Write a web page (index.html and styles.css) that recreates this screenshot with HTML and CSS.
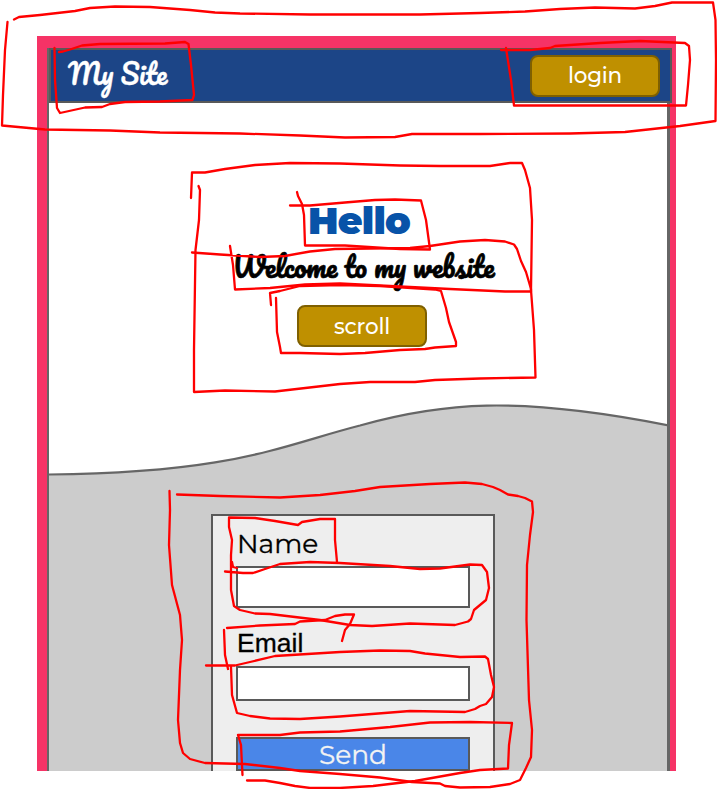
FILE: index.html
```html
<!DOCTYPE html>
<html lang="en">
<head>
<meta charset="utf-8">
<title>My Site</title>
<link rel="stylesheet" href="styles.css">
</head>
<body>
<div class="frame">
  <main class="canvas">
    <header class="header">
      <span class="brand">My Site</span>
      <button class="button">login</button>
    </header>
    <section class="hero">
      <h1>Hello</h1>
      <p class="tagline">Welcome to my website</p>
      <button class="button scroll">scroll</button>
    </section>
    <svg class="wave" width="618" height="76" viewBox="49 404 618 76">
      <path class="wave-fill" d="M47 474.500C233 473 280 446 360 425.500C440 403 515 395 669 425.500V482H47Z"/>
    </svg>
    <section class="contact">
      <form class="form">
        <label class="name" for="name">Name</label>
        <input id="name" class="field field-name" type="text">
        <label class="email" for="email">Email</label>
        <input id="email" class="field field-email" type="text">
        <button class="send" type="button">Send</button>
      </form>
    </section>
  </main>
</div>
<svg class="notes" width="717" height="789" viewBox="0 0 717 789" aria-hidden="true">
  <path d="M14 19.500L19 17L40 15L75 11L90 8L115 6.500L150 7L190 10L215 12.500L240 13.500L310 14.500H420L480 13L525 11.500L560 9L595 7.500L635 8.500L655 6L672 2.500H713L715.500 20L716 60L715.500 121L680 126L625 132L570 133.500L480 134H412L395 137L345 137.500L300 135.500L240 133.500L160 132.500L110 130.500L45 129.500L2 125.500L3 95L5 50L7.500 22"/>
  <path d="M59 52L63 51.500L70 49.500L82 45.500L100 44L165 43.500L185 42L188.500 44L191 65L194 95L192.500 100L160 101.500L125 102L110 104L102 107L85 107.500L60 113L57 108L55 80L54.500 48"/>
  <path d="M501 50H530L550 48L555 46L600 43L640 41L685 43L689 46L690 60L688 85L686 105.500H514L511 80L506 48"/>
  <path d="M191 198L192 172.500H205L225 169L255 165L290 163L340 163.500L400 165.500L440 166H490L510 163L522 163L525 170L530 188L532 220L531 290L534 330L535.500 377.500L480 378.500L435 380L415 382H370L340 384L275 391.500L225 390.500L194 392L194 350L195.500 250L199 220L200 190L198.500 186"/>
  <path d="M290 205.500H310L345 202.500L375 200L395 199.500L421 200.500L426 220L430 249.500L400 249L345 245.500H305L304 215L302 204L298 196L297 192"/>
  <path d="M192 252.500L220 254.500L260 257L285 256L310 251.500L335 249L370 248.500L410 248L430 246L460 241.500L485 240L505 241.500L514 244.500L517 249L521 261L526 272L531 289V291.500H505L450 289L400 286.500L340 283.500L305 284.500L270 288L235 289.500L233 265L230 246"/>
  <path d="M271 305L270 293L280 291L300 286L340 285L380 286L435 289.500L441 291L446 308L449 322L456 342V346L435 347.500L425 349L400 350L365 353L340 354L300 353H281L280 347L277 332L276 298"/>
  <path d="M177 494.500L220 496L280 497.500L320 495L355 491L380 487L430 484L465 482.500L482 484L493 487L500 490L508 494.500L518 496L525 498L532 501.500L533 512L530 535L527 565L526.500 620L529 700L532 730L531 757L526 768L520 780L510 784L490 787L460 787.500L445 786L440 783.500L412 782L380 777.500L340 774L300 771L280 768L245 764L205 763L190 759L183 753L180 743L178 720L180 670L182 640L180 615L172 585L169 545L170 510L169.500 491"/>
  <path d="M337 562L335 540V519H320L302 522L298 525L275 521L255 518L229 517.500V527L232 540L231 555V590L234 606L240 610L255 613.500L270 614L320 620L350 625L372 626L410 623.500L455 625L468 621.500L471 619L474 610L486 600L489 588L487 572L482 565L470 564.500L440 568.500L420 569L390 566L340 563L310 562L280 564L265 569L253 573L243 573L225 571.500M232 562L233 567L237 568"/>
  <path d="M227 628L260 625.500L295 624L300 621.500L325 620L335 616L345 614.500H354L350 624L345 630L342 641M224 630L225 655L228 669"/>
  <path d="M206 665.500H235L250 662L275 656L340 652L380 650.500L410 651L425 653.500L460 657L485 656.500L488 659L491 675L494 687L492 697L486 704L480 706L475 709L465 712L410 711L340 716.500L300 719L270 718.500L250 716L237 713L232 695L231 667"/>
  <path d="M238 735H280L300 732.500L340 731.500L390 727L430 722.500L470 722L512 723L509 745L508 768.500L480 770L460 773L415 781L373 786L340 788H310L295 786L280 783L265 780.500H247M238 735L241 745L242.500 775"/>
</svg>
</body>
</html>
```
FILE: styles.css
```css
* { box-sizing: border-box; }

body {
  margin: 0;
  height: 789px;
  overflow: hidden;
  background: #fff;
  color: #000;
  font-family: Montserrat, Inter, sans-serif;
}

.frame {
  width: 639px;
  height: 735px;
  margin: 36px 0 0 37px;
  padding: 12px 6px 0 10px;
  background: #f63366;
}

.canvas {
  display: flex;
  flex-direction: column;
  height: 723px;
  border: solid #666;
  border-width: 0 3px 0 2px;
  background: #fff;
}

.header {
  display: flex;
  justify-content: space-between;
  align-items: center;
  flex: none;
  width: 623px;
  height: 55px;
  padding: 0 10px 0 17px;
  border: 2px solid #595959;
  background: #1c4587;
}

.brand, .tagline {
  font-family: Pacifico, "Liberation Serif", serif;
  font-weight: 400;
  white-space: nowrap;
}

.brand {
  color: #fff;
  font-size: 27px;
  line-height: 40px;
  padding-bottom: 3px;
  -webkit-text-stroke: 0.3px #fff;
}

.button {
  display: block;
  width: 130px;
  height: 42px;
  padding: 0;
  border: 2px solid #7f6000;
  border-radius: 8px;
  background: #bf9000;
  color: #fff;
  font: 500 21.5px/37px Montserrat, Inter, sans-serif;
  letter-spacing: -0.2px;
}

.hero {
  display: flex;
  flex-direction: column;
  align-items: center;
  flex: none;
  height: 301px;
  padding-top: 98px;
}

h1 {
  margin: 0 0 0 2px;
  color: #0853a8;
  font-size: 38px;
  font-weight: 900;
  letter-spacing: -0.8px;
  line-height: 40px;
}

.tagline {
  margin: 6px 0 18px 11px;
  font-size: 26.8px;
  line-height: 40px;
  -webkit-text-stroke: 0.7px #000;
}

.scroll { margin-left: 8px; }

.wave { display: block; flex: none; }

.wave-fill {
  fill: #ccc;
  stroke: #666;
  stroke-width: 2.2;
}

.contact {
  flex: 1;
  min-height: 0;
  padding: 34px 0 0 162px;
  background: #ccc;
}

.form {
  display: flex;
  flex-direction: column;
  width: 284px;
  height: 257px;
  padding: 10px 23px 0;
  border: 2px solid #595959;
  border-bottom: 0;
  background: #eee;
}

label {
  height: 40px;
  padding-left: 1px;
  font-size: 26.5px;
  line-height: 35px;
}

.name { -webkit-text-stroke: 0.3px #000; }

.email {
  margin-top: 18px;
  font-family: "Liberation Sans", sans-serif;
  -webkit-text-stroke: 0.3px #000;
}

.field {
  width: 234px;
  padding: 0 8px;
  border: 2px solid #595959;
  background: #fff;
}

.field-name { height: 42px; }
.field-email { height: 35px; }

.send {
  width: 234px;
  height: 34px;
  margin-top: 36px;
  padding: 0;
  border: 2px solid #595959;
  background: #4a86e8;
  color: #f3f3f3;
  font: 400 26.5px/32px Montserrat, Inter, sans-serif;
  -webkit-text-stroke: 0.3px #f3f3f3;
}

.notes {
  position: absolute;
  top: 0;
  left: 0;
  pointer-events: none;
}

.notes path {
  fill: none;
  stroke: #f00;
  stroke-width: 2.3;
  stroke-linecap: round;
  stroke-linejoin: round;
}
```
